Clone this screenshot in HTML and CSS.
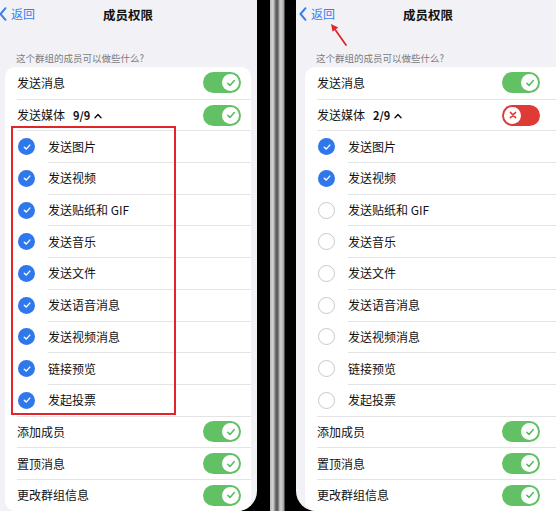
FILE: index.html
```html
<!DOCTYPE html>
<html lang="zh-CN">
<head>
<meta charset="utf-8">
<title>成员权限</title>
<link rel="stylesheet" href="styles.css">
</head>
<body>
<div class="stage">
  <section class="screen screen-left">
    <header class="nav">
      <a class="back"><svg class="chev" viewBox="0 0 8 14"><path d="M6.5 1.2L1.5 7l5 5.8"/></svg>返回</a>
      <h1 class="title">成员权限</h1>
      <span></span>
    </header>
    <p class="section-label">这个群组的成员可以做些什么?</p>
    <div class="card">
      <div class="row top first"><span class="label">发送消息</span><span class="switch on"><span class="knob"><svg viewBox="0 0 12 12"><path d="M2.8 6.2l2.2 2.2 4.3-4.8"/></svg></span></span></div>
      <div class="row top"><span class="label">发送媒体</span><span class="count">9/9</span><svg class="caret" viewBox="0 0 8 6"><path d="M1 4.8L4 1.6l3 3.2"/></svg><span class="switch on"><span class="knob"><svg viewBox="0 0 12 12"><path d="M2.8 6.2l2.2 2.2 4.3-4.8"/></svg></span></span></div>
      <div class="row item group-start"><span class="tick on"><svg viewBox="0 0 10 10"><path d="M2.3 5.2l1.9 1.9 3.6-4"/></svg></span><span class="label">发送图片</span></div>
      <div class="row item"><span class="tick on"><svg viewBox="0 0 10 10"><path d="M2.3 5.2l1.9 1.9 3.6-4"/></svg></span><span class="label">发送视频</span></div>
      <div class="row item"><span class="tick on"><svg viewBox="0 0 10 10"><path d="M2.3 5.2l1.9 1.9 3.6-4"/></svg></span><span class="label">发送贴纸和 GIF</span></div>
      <div class="row item"><span class="tick on"><svg viewBox="0 0 10 10"><path d="M2.3 5.2l1.9 1.9 3.6-4"/></svg></span><span class="label">发送音乐</span></div>
      <div class="row item"><span class="tick on"><svg viewBox="0 0 10 10"><path d="M2.3 5.2l1.9 1.9 3.6-4"/></svg></span><span class="label">发送文件</span></div>
      <div class="row item"><span class="tick on"><svg viewBox="0 0 10 10"><path d="M2.3 5.2l1.9 1.9 3.6-4"/></svg></span><span class="label">发送语音消息</span></div>
      <div class="row item"><span class="tick on"><svg viewBox="0 0 10 10"><path d="M2.3 5.2l1.9 1.9 3.6-4"/></svg></span><span class="label">发送视频消息</span></div>
      <div class="row item"><span class="tick on"><svg viewBox="0 0 10 10"><path d="M2.3 5.2l1.9 1.9 3.6-4"/></svg></span><span class="label">链接预览</span></div>
      <div class="row item"><span class="tick on"><svg viewBox="0 0 10 10"><path d="M2.3 5.2l1.9 1.9 3.6-4"/></svg></span><span class="label">发起投票</span></div>
      <div class="row top"><span class="label">添加成员</span><span class="switch on"><span class="knob"><svg viewBox="0 0 12 12"><path d="M2.8 6.2l2.2 2.2 4.3-4.8"/></svg></span></span></div>
      <div class="row top"><span class="label">置顶消息</span><span class="switch on"><span class="knob"><svg viewBox="0 0 12 12"><path d="M2.8 6.2l2.2 2.2 4.3-4.8"/></svg></span></span></div>
      <div class="row top"><span class="label">更改群组信息</span><span class="switch on"><span class="knob"><svg viewBox="0 0 12 12"><path d="M2.8 6.2l2.2 2.2 4.3-4.8"/></svg></span></span></div>
    </div>
    <div class="highlight"></div>
  </section>

  <div class="frame"></div>

  <section class="screen screen-right">
    <header class="nav">
      <a class="back"><svg class="chev" viewBox="0 0 8 14"><path d="M6.5 1.2L1.5 7l5 5.8"/></svg>返回</a>
      <h1 class="title">成员权限</h1>
      <span></span>
    </header>
    <p class="section-label">这个群组的成员可以做些什么?</p>
    <div class="card card-wide">
      <div class="row top first"><span class="label">发送消息</span><span class="switch on"><span class="knob"><svg viewBox="0 0 12 12"><path d="M2.8 6.2l2.2 2.2 4.3-4.8"/></svg></span></span></div>
      <div class="row top"><span class="label">发送媒体</span><span class="count">2/9</span><svg class="caret" viewBox="0 0 8 6"><path d="M1 4.8L4 1.6l3 3.2"/></svg><span class="switch off"><span class="knob"><svg viewBox="0 0 12 12"><path d="M3.4 3.4l5.2 5.2M8.6 3.4l-5.2 5.2"/></svg></span></span></div>
      <div class="row item group-start"><span class="tick on"><svg viewBox="0 0 10 10"><path d="M2.3 5.2l1.9 1.9 3.6-4"/></svg></span><span class="label">发送图片</span></div>
      <div class="row item"><span class="tick on"><svg viewBox="0 0 10 10"><path d="M2.3 5.2l1.9 1.9 3.6-4"/></svg></span><span class="label">发送视频</span></div>
      <div class="row item"><span class="tick"></span><span class="label">发送贴纸和 GIF</span></div>
      <div class="row item"><span class="tick"></span><span class="label">发送音乐</span></div>
      <div class="row item"><span class="tick"></span><span class="label">发送文件</span></div>
      <div class="row item"><span class="tick"></span><span class="label">发送语音消息</span></div>
      <div class="row item"><span class="tick"></span><span class="label">发送视频消息</span></div>
      <div class="row item"><span class="tick"></span><span class="label">链接预览</span></div>
      <div class="row item"><span class="tick"></span><span class="label">发起投票</span></div>
      <div class="row top"><span class="label">添加成员</span><span class="switch on"><span class="knob"><svg viewBox="0 0 12 12"><path d="M2.8 6.2l2.2 2.2 4.3-4.8"/></svg></span></span></div>
      <div class="row top"><span class="label">置顶消息</span><span class="switch on"><span class="knob"><svg viewBox="0 0 12 12"><path d="M2.8 6.2l2.2 2.2 4.3-4.8"/></svg></span></span></div>
      <div class="row top"><span class="label">更改群组信息</span><span class="switch on"><span class="knob"><svg viewBox="0 0 12 12"><path d="M2.8 6.2l2.2 2.2 4.3-4.8"/></svg></span></span></div>
    </div>
    <svg class="arrow" viewBox="0 0 25 32"><path class="arrow-line" d="M20 27L9.4 12.1"/><path class="arrow-head" d="M5 6l7.2 3.6-5.6 4.1z"/></svg>
  </section>
</div>
</body>
</html>
```

FILE: styles.css
```css
html, body {
  margin: 0;
  padding: 0;
  background: #000;
}

body {
  width: 556px;
  height: 511px;
  overflow: hidden;
  font-family: "Noto Sans CJK SC", "Noto Sans", sans-serif;
  color: #111;
}

.stage {
  display: flex;
  width: 560px;
  height: 511px;
  background: #000;
}

.screen {
  position: relative;
  flex: 0 0 261px;
  width: 261px;
  height: 511px;
  background: #f2f2f6;
  overflow: hidden;
}

.screen-left {
  margin-left: -4px;
  border-bottom-right-radius: 20px;
}

.screen-right {
  border-bottom-left-radius: 20px;
}

.frame {
  flex: 0 0 39px;
  height: 511px;
  background: linear-gradient(to right,
    #000 0, #000 13px,
    #b9b9b9 13px, #d6d6d6 16px, #8a8a8a 18px,
    #5e5e5e 19px, #5e5e5e 21px,
    #a8a8a8 22px, #d2d2d2 24px, #9a9a9a 27px,
    #000 28px, #000 39px);
}

/* nav bar */
.nav {
  display: grid;
  grid-template-columns: 1fr auto 1fr;
  align-items: center;
  height: 30px;
  padding: 0 0 0 3px;
}

.back {
  display: flex;
  align-items: center;
  gap: 4px;
  color: #3a7ef0;
  font-size: 12px;
  line-height: 14px;
  margin-top: -2px;
}

.chev {
  width: 8px;
  height: 14px;
  fill: none;
  stroke: #3a7ef0;
  stroke-width: 2;
  stroke-linecap: round;
  stroke-linejoin: round;
}

.title {
  margin: 0;
  font-size: 12.5px;
  font-weight: 700;
  line-height: 16px;
  color: #111;
}

.section-label {
  margin: 22px 0 3px 20px;
  font-size: 9.5px;
  line-height: 12px;
  color: #7b7b80;
}

/* list card */
.card {
  margin: 0 6px 0 9px;
  background: #fff;
  border-radius: 10px;
  overflow: hidden;
}

.card-wide {
  margin-right: -8px;
}

.row {
  display: flex;
  align-items: center;
  height: 31.7px;
  box-sizing: border-box;
  border-top: 1px solid #e4e4e7;
  font-size: 12px;
}

.row.first {
  border-top: none;
}

.row.top {
  margin-left: 12px;
  padding-right: 10px;
}

.card-wide .row.top {
  padding-right: 25px;
}

.row.item {
  margin-left: 43px;
}

.row.item.group-start,
.row.item + .row.top {
  margin-left: 12px;
}

.row.item.group-start {
  padding-left: 31px;
}

.label {
  line-height: 16px;
  white-space: nowrap;
}

.count {
  margin-left: 8px;
  font-size: 11px;
  font-weight: 700;
  line-height: 14px;
}

.caret {
  width: 8px;
  height: 6px;
  margin-left: 4px;
  margin-top: 1px;
  fill: none;
  stroke: #111;
  stroke-width: 1.4;
  stroke-linecap: round;
  stroke-linejoin: round;
}

/* switches */
.switch {
  display: flex;
  align-items: center;
  justify-content: flex-end;
  width: 38px;
  height: 21px;
  padding: 2px;
  box-sizing: border-box;
  border-radius: 11px;
  margin-left: auto;
  background: #62c065;
}

.switch.off {
  justify-content: flex-start;
  background: #e03a36;
}

.knob {
  display: flex;
  align-items: center;
  justify-content: center;
  width: 17px;
  height: 17px;
  border-radius: 50%;
  background: #fff;
}

.knob svg {
  width: 12px;
  height: 12px;
  fill: none;
  stroke: #55b95a;
  stroke-width: 1.5;
  stroke-linecap: round;
  stroke-linejoin: round;
}

.switch.off .knob svg {
  stroke: #e03a36;
}

/* check circles */
.tick {
  flex: 0 0 auto;
  display: flex;
  align-items: center;
  justify-content: center;
  width: 17px;
  height: 17px;
  box-sizing: border-box;
  border-radius: 50%;
  border: 1px solid #c9c9ce;
  margin-left: -30px;
  margin-right: 13px;
  background: #fff;
}

.tick.on {
  border: none;
  background: #2f78ec;
}

.tick svg {
  width: 10px;
  height: 10px;
  fill: none;
  stroke: #fff;
  stroke-width: 1.4;
  stroke-linecap: round;
  stroke-linejoin: round;
}

/* annotations */
.highlight {
  position: absolute;
  left: 15px;
  top: 126px;
  width: 165px;
  height: 289px;
  box-sizing: border-box;
  border: 2px solid #e2252b;
}

.arrow {
  position: absolute;
  left: 30px;
  top: 18px;
  width: 25px;
  height: 32px;
}

.arrow-line {
  fill: none;
  stroke: #e2252b;
  stroke-width: 1.8;
  stroke-linecap: round;
}

.arrow-head {
  fill: #e2252b;
}
```
